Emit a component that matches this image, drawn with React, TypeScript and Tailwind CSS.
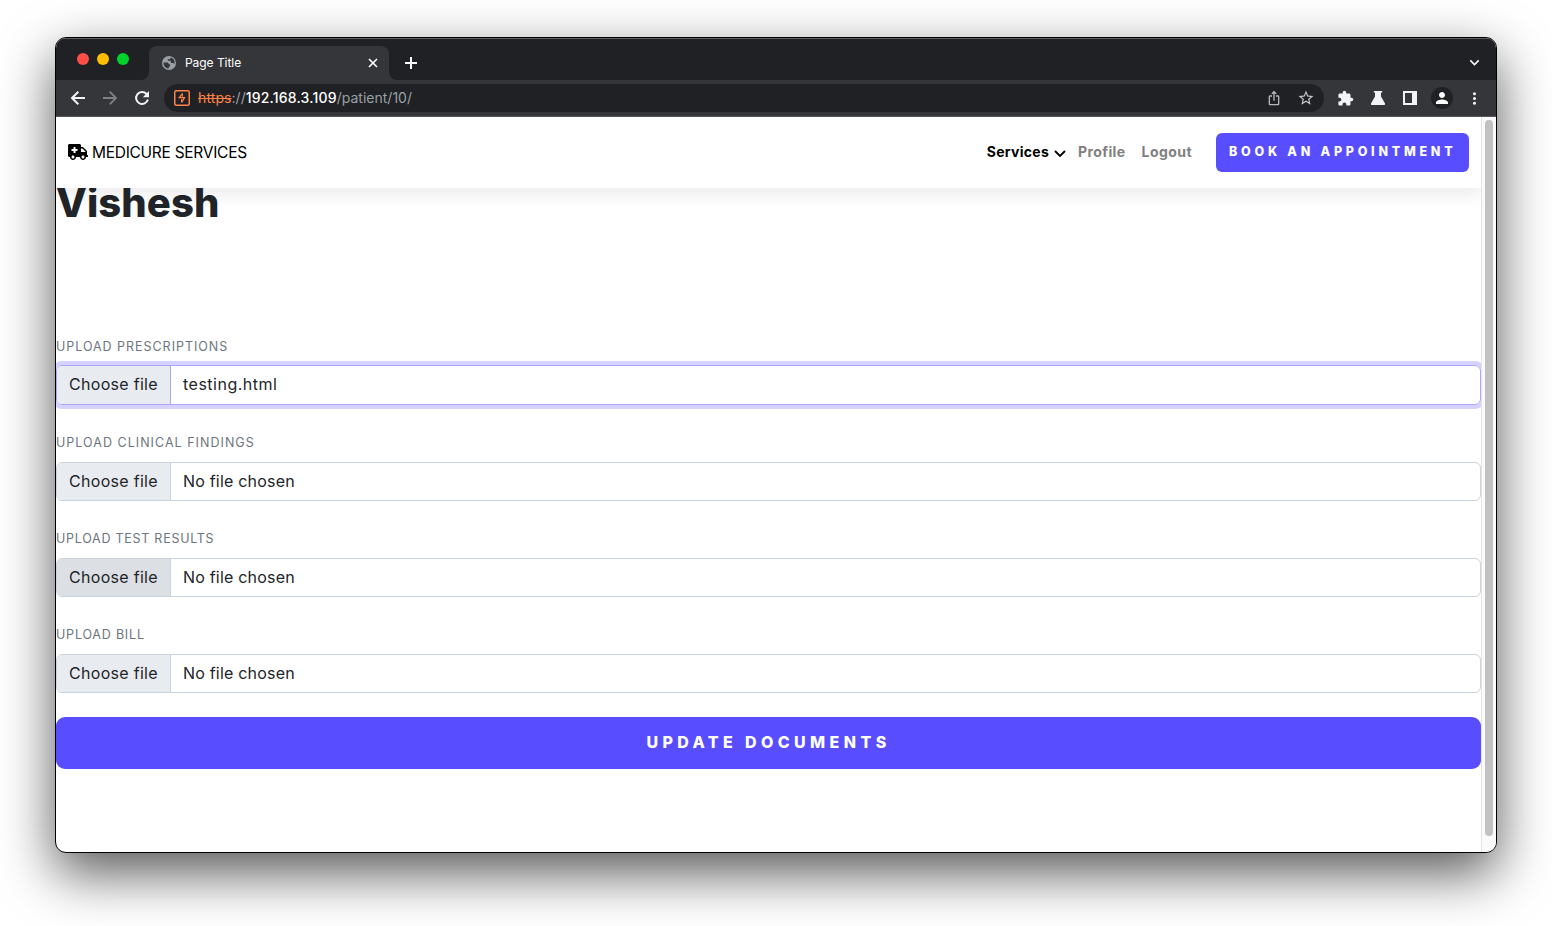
import React from "react";
import { MdStarBorder, MdExtension, MdMoreVert, MdPerson, MdIosShare, MdExpandMore } from "react-icons/md";

const fields = [
  { label: "UPLOAD PRESCRIPTIONS", file: "testing.html", focus: true, hover: false, ls: "tracking-[0.97px]", fls: "tracking-[0.5px]" },
  { label: "UPLOAD CLINICAL FINDINGS", file: "No file chosen", focus: false, hover: false, ls: "tracking-[1.03px]", fls: "tracking-[0.2px]" },
  { label: "UPLOAD TEST RESULTS", file: "No file chosen", focus: false, hover: true, ls: "tracking-[0.74px]", fls: "tracking-[0.2px]" },
  { label: "UPLOAD BILL", file: "No file chosen", focus: false, hover: false, ls: "tracking-[0.8px]", fls: "tracking-[0.2px]" },
];

function LineIcon({ d, className, width }: { d: string; className: string; width: number }) {
  return (
    <svg className={className} viewBox="0 0 20 20" fill="none" stroke="currentColor" strokeWidth={width}>
      <path d={d} />
    </svg>
  );
}

function TabStrip() {
  return (
    <div className="flex h-[42px] shrink-0 items-end bg-[#202124] shadow-[inset_0_1px_0_#5b5c5e]">
      <div className="mb-[15px] ml-[21px] flex gap-2">
        <span className="size-3 rounded-full bg-[#ff4e45]" />
        <span className="size-3 rounded-full bg-[#ffbe00]" />
        <span className="size-3 rounded-full bg-[#00d22c]" />
      </div>
      <svg className="ml-3 h-2 w-2" viewBox="0 0 8 8"><path d="M8 0v8H0a8 8 0 0 0 8-8z" fill="#35363a" /></svg>
      <div className="flex h-[34px] w-[240px] items-center rounded-t-lg bg-[#35363a] pl-[13px]">
        <svg className="size-[14px]" viewBox="0 0 14 14">
          <circle cx="7" cy="7" r="7" fill="#9aa0a6" />
          <path d="M1.500 6.600h3.300c1.200 0 1.900.7 1.900 1.700h1.400v1.300c0 .8-.5 1.200-1.300 1.200v1.700C3.900 12.600 1.500 10.200 1.500 6.600z" fill="#35363a" />
          <path d="M8.600 1.600c.1 1.200-.4 1.700-1.500 1.700H5.800v1.500h1.900c.8 0 1.200.5 1.200 1.200v.9h1.500c1.200 0 1.700.5 2 1.300.9-3-.7-5.900-3.800-6.600z" fill="#35363a" />
        </svg>
        <span className="ml-[9px] text-[12px] tracking-[-0.05px] text-white">Page Title</span>
        <LineIcon className="mr-[6px] ml-auto size-5 text-white" width={1.6} d="M6 6l8 8M14 6l-8 8" />
      </div>
      <svg className="h-2 w-2" viewBox="0 0 8 8"><path d="M0 0v8h8a8 8 0 0 1-8-8z" fill="#35363a" /></svg>
      <LineIcon className="mb-[7px] ml-1 size-5 text-white" width={2} d="M10 4v12M4 10h12" />
      <MdExpandMore className="mr-[12px] mb-[8px] ml-auto size-[19px] text-white" />
    </div>
  );
}

function Toolbar() {
  return (
    <div className="flex h-[37px] shrink-0 items-center border-b border-[#57585b] bg-[#35363a] text-[#f1f3f4]">
      <LineIcon className="ml-[12px] size-5" width={2} d="M17 10H4.400M10.300 3.700 4 10l6.300 6.300" />
      <LineIcon className="ml-3 size-5 text-[#7f8083]" width={1.8} d="M3 10h12.600M9.700 3.700 16 10l-6.300 6.300" />
      <svg className="ml-3 size-5" viewBox="0 0 20 20" fill="none" stroke="currentColor" strokeWidth="2">
        <path d="M15.900 11.500A6 6 0 1 1 14.600 6l1 1" />
        <path d="M17 3v6.200h-6.200z" fill="currentColor" stroke="none" />
      </svg>
      <div className="ml-[12px] flex h-7 w-[1160px] items-center rounded-full bg-[#202124] pl-[10px] text-[14px]">
        <svg className="size-4" viewBox="0 0 16 16" fill="none" stroke="#ff8246">
          <rect x=".75" y=".75" width="14.5" height="14.5" rx="1.5" strokeWidth="1.5" />
          <path d="M8.400 3.600 5.200 7.700h5.300L7.600 12.300" strokeWidth="1.300" />
          <path d="M8.400 3.400v3.400M7.600 9v3.400" strokeWidth="1" />
        </svg>
        <span className="mb-[2px] ml-2 whitespace-nowrap text-[#9aa0a6]">
          <span className="tracking-[0.1px] text-[#ff8246] line-through">https</span>://<span className="tracking-[0.2px] font-medium text-white">192.168.3.109</span>/patient/10/
        </span>
        <MdIosShare className="ml-auto size-4 text-[#b5b7ba]" />
        <MdStarBorder className="mr-[9px] ml-[15px] size-[18px] text-[#c4c6c9]" />
      </div>
      <MdExtension className="ml-[13px] size-[17px]" />
      <svg className="ml-[16px] h-4 w-4" viewBox="0 0 16 16" fill="currentColor"><path d="M3.800 1h8.400v1.600H11v4l3.900 6.600c.5.9 0 1.800-1 1.800H2.100c-1 0-1.500-.9-1-1.800L5 6.600v-4H3.800z" /></svg>
      <svg className="ml-[17px] h-[14px] w-[14px]" viewBox="0 0 14 14"><path fill="currentColor" fillRule="evenodd" d="M0 0h14v14H0zM2 2v10h7V2z" /></svg>
      <span className="ml-[14px] flex size-[22px] items-center justify-center rounded-full bg-[#202124]"><MdPerson className="size-[18px] text-white" /></span>
      <MdMoreVert className="ml-[12px] size-[19px]" />
    </div>
  );
}

function NavBar() {
  return (
    <nav className="relative z-10 flex h-[71px] shrink-0 items-center bg-white pr-3 pl-3 shadow-[0_8px_16px_rgba(0,0,0,0.075)]">
      <svg className="mb-px h-4 w-5" viewBox="0 0 640 512" fill="#000">
        <path d="M624 352h-16V243.900c0-12.700-5.100-24.900-14.100-33.900L494 110.100c-9-9-21.200-14.100-33.900-14.100H416V48c0-26.500-21.500-48-48-48H48C21.500 0 0 21.500 0 48v320c0 26.500 21.500 48 48 48h16c0 53 43 96 96 96s96-43 96-96h128c0 53 43 96 96 96s96-43 96-96h48c8.800 0 16-7.200 16-16v-32c0-8.800-7.200-16-16-16zM160 464c-26.500 0-48-21.500-48-48s21.500-48 48-48 48 21.500 48 48-21.500 48-48 48zm144-248c0 4.400-3.600 8-8 8h-56v56c0 4.400-3.600 8-8 8h-48c-4.400 0-8-3.600-8-8v-56h-56c-4.400 0-8-3.600-8-8v-48c0-4.400 3.600-8 8-8h56v-56c0-4.400 3.600-8 8-8h48c4.400 0 8 3.600 8 8v56h56c4.400 0 8 3.600 8 8v48zm176 248c-26.500 0-48-21.500-48-48s21.500-48 48-48 48 21.500 48 48-21.500 48-48 48zm80-208H416V144h44.100l99.900 99.900V256z" />
      </svg>
      <span className="ml-1 text-[15.500px] tracking-[-0.28px] text-black">MEDICURE SERVICES</span>
      <div className="ml-auto flex items-center text-[14px] font-bold">
        <span className="mb-[2px] tracking-[0.28px] text-black">Services</span>
        <svg className="mt-[2px] ml-[5px] h-[8px] w-[12px]" viewBox="0 0 12 8" fill="none" stroke="#000" strokeWidth="1.800" strokeLinecap="round"><path d="M1.500 1.500 6 6l4.500-4.500" /></svg>
        <span className="mb-[2px] ml-3 tracking-[0.4px] text-[#808080]">Profile</span>
        <span className="mb-[2px] ml-4 tracking-[0.45px] text-[#808080]">Logout</span>
        <button className="ml-6 flex h-[39px] w-[253px] items-center rounded-[6px] bg-[#584dff] pl-[13px] text-[12.500px] font-extrabold tracking-[3.750px] whitespace-nowrap text-white">
          BOOK AN APPOINTMENT
        </button>
      </div>
    </nav>
  );
}

export default function App() {
  return (
    <div className="h-[926px] w-[1552px] overflow-hidden bg-white pt-[37px] pl-[55px] font-['Inter',sans-serif]">
      <div className="h-[816px] w-[1442px] rounded-[11px] border border-black bg-white shadow-[0_20px_54px_rgba(0,0,0,0.66)]">
        <div className="flex h-full flex-col overflow-hidden rounded-[10px]">
          <TabStrip />
          <Toolbar />
          <div className="flex min-h-0 flex-1">
            <div className="flex w-[1425px] shrink-0 flex-col overflow-hidden">
              <NavBar />
              <h1 className="-mt-[9px] h-[156px] text-[40px] leading-[48px] font-extrabold tracking-[0.100px] text-[#212529]">Vishesh</h1>
              {fields.map((f) => (
                <div key={f.label} className="flex h-[96px] shrink-0 flex-col">
                  <div className={`flex h-[24px] items-center text-[12.500px] text-[#6c757d] ${f.ls}`}>{f.label}</div>
                  <div className={f.focus ? "mt-[6px] flex h-[40px] overflow-visible rounded-[6px] border border-[#aaa6ff] shadow-[0_0_0_4px_#d5d2ff]" : "mt-[7px] flex h-[39px] rounded-[6px] border border-[#cbd3dc]"}>
                    <span className={`flex w-[114px] shrink-0 items-center rounded-l-[5px] border-r pb-[2px] pl-3 text-[16px] tracking-[0.3px] text-[#212529] ${f.hover ? "bg-[#dcdfe4]" : "bg-[#e8ebf0]"} ${f.focus ? "border-[#aaa6ff]" : "border-[#cbd3dc]"}`}>Choose file</span>
                    <span className={`flex items-center pb-[2px] pl-3 text-[16px] text-[#212529] ${f.fls}`}>{f.file}</span>
                  </div>
                </div>
              ))}
              <button className="-mt-[2px] flex h-[52px] shrink-0 items-center justify-center rounded-[9px] bg-[#584dff] pb-[2px] text-[16px] font-extrabold tracking-[4.400px] text-white">
                UPDATE DOCUMENTS
              </button>
            </div>
            <div className="flex w-[15px] justify-center border-l border-[#e4e4e4] bg-[#fafafa] pt-[3px]">
              <span className="h-[716px] w-2 rounded-full bg-[#c1c1c1]" />
            </div>
          </div>
        </div>
      </div>
    </div>
  );
}
